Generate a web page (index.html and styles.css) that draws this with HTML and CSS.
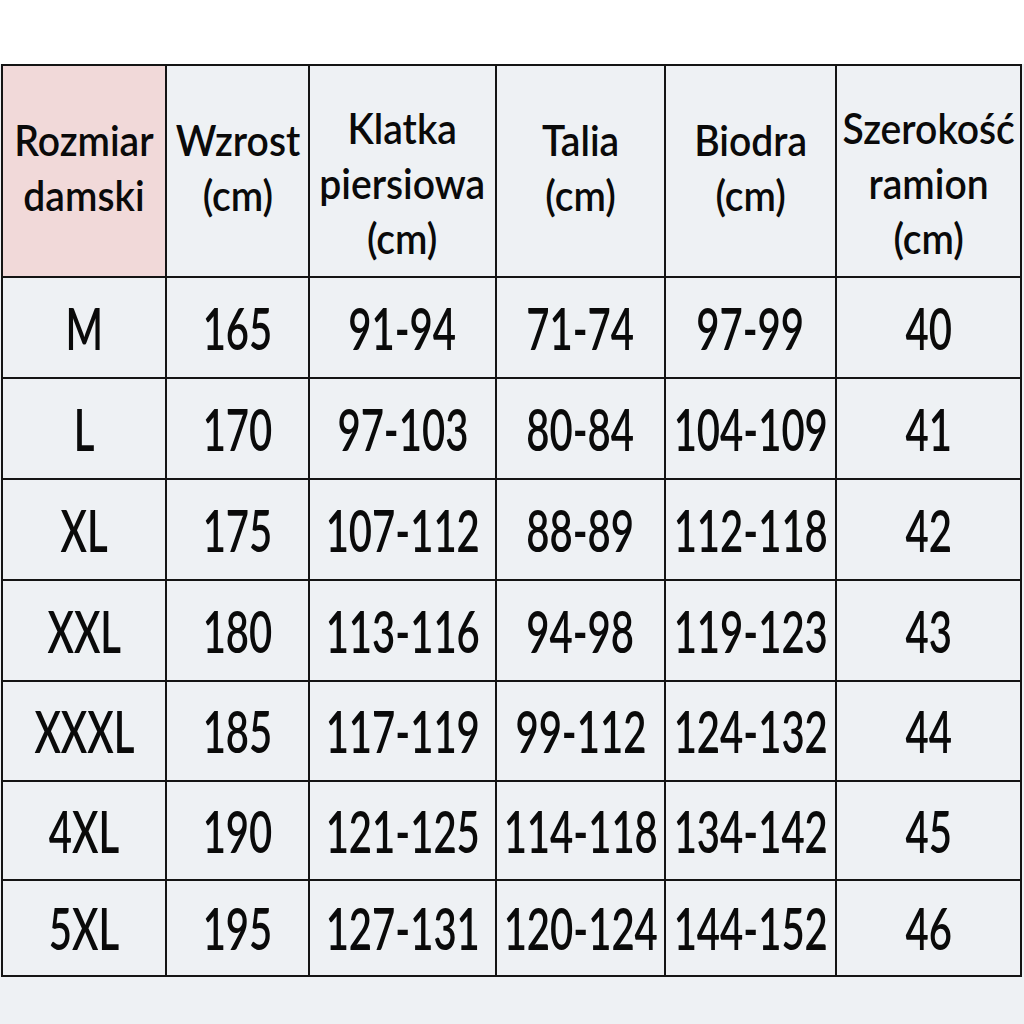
FILE: index.html
```html
<!DOCTYPE html>
<html lang="pl">
<head>
<meta charset="utf-8">
<link rel="stylesheet" href="styles.css">
</head>
<body>
<div class="top"></div>
<div class="table">
  <div class="cell head pink"><span class="h two">Rozmiar<br>damski</span></div>
  <div class="cell head"><span class="h two">Wzrost<br>(cm)</span></div>
  <div class="cell head"><span class="h tri">Klatka<br>piersiowa<br>(cm)</span></div>
  <div class="cell head"><span class="h two">Talia<br>(cm)</span></div>
  <div class="cell head"><span class="h two">Biodra<br>(cm)</span></div>
  <div class="cell head"><span class="h tri">Szerokość<br>ramion<br>(cm)</span></div>

  <div class="cell"><span class="d">M</span></div>
  <div class="cell"><span class="d">165</span></div>
  <div class="cell"><span class="d">91-94</span></div>
  <div class="cell"><span class="d">71-74</span></div>
  <div class="cell"><span class="d">97-99</span></div>
  <div class="cell"><span class="d">40</span></div>

  <div class="cell"><span class="d">L</span></div>
  <div class="cell"><span class="d">170</span></div>
  <div class="cell"><span class="d">97-103</span></div>
  <div class="cell"><span class="d">80-84</span></div>
  <div class="cell"><span class="d">104-109</span></div>
  <div class="cell"><span class="d">41</span></div>

  <div class="cell"><span class="d">XL</span></div>
  <div class="cell"><span class="d">175</span></div>
  <div class="cell"><span class="d">107-112</span></div>
  <div class="cell"><span class="d">88-89</span></div>
  <div class="cell"><span class="d">112-118</span></div>
  <div class="cell"><span class="d">42</span></div>

  <div class="cell"><span class="d">XXL</span></div>
  <div class="cell"><span class="d">180</span></div>
  <div class="cell"><span class="d">113-116</span></div>
  <div class="cell"><span class="d">94-98</span></div>
  <div class="cell"><span class="d">119-123</span></div>
  <div class="cell"><span class="d">43</span></div>

  <div class="cell"><span class="d">XXXL</span></div>
  <div class="cell"><span class="d">185</span></div>
  <div class="cell"><span class="d">117-119</span></div>
  <div class="cell"><span class="d">99-112</span></div>
  <div class="cell"><span class="d">124-132</span></div>
  <div class="cell"><span class="d">44</span></div>

  <div class="cell"><span class="d">4XL</span></div>
  <div class="cell"><span class="d">190</span></div>
  <div class="cell"><span class="d">121-125</span></div>
  <div class="cell"><span class="d">114-118</span></div>
  <div class="cell"><span class="d">134-142</span></div>
  <div class="cell"><span class="d">45</span></div>

  <div class="cell"><span class="d">5XL</span></div>
  <div class="cell"><span class="d">195</span></div>
  <div class="cell"><span class="d">127-131</span></div>
  <div class="cell"><span class="d">120-124</span></div>
  <div class="cell"><span class="d">144-152</span></div>
  <div class="cell"><span class="d">46</span></div>
</div>
</body>
</html>
```
FILE: styles.css
```css
html, body {
  margin: 0;
  padding: 0;
  background: #eef1f4;
  width: 1024px;
  height: 1024px;
  overflow: hidden;
}
body {
  font-family: Lato, "Open Sans", "DejaVu Sans", sans-serif;
  color: #0a0a0a;
}
.top {
  height: 64px;
  background: #ffffff;
}
.table {
  display: grid;
  grid-template-columns: 162px 141px 185px 167px 169px 183px;
  grid-template-rows: 210px 99px 99px 99px 99px 98px 97px 94px;
  gap: 2px;
  padding: 2px;
  background: #141414;
  width: 1017px;
  margin-left: 1px;
}
.cell {
  background: #eef1f4;
  display: flex;
  align-items: center;
  justify-content: center;
  overflow: visible;
  min-width: 0;
}
.pink {
  background: #f1d9d9;
}
.h {
  display: inline-block;
  text-align: center;
  font-size: 42px;
  font-weight: 600;
  line-height: 55px;
  transform: scaleX(0.93);
  white-space: nowrap;
}
.two {
  margin-bottom: 6px;
}
.tri {
  margin-top: 24px;
}
.d {
  display: inline-block;
  font-size: 58px;
  font-weight: 600;
  line-height: 1;
  transform: scaleX(0.69);
  white-space: nowrap;
}
```
